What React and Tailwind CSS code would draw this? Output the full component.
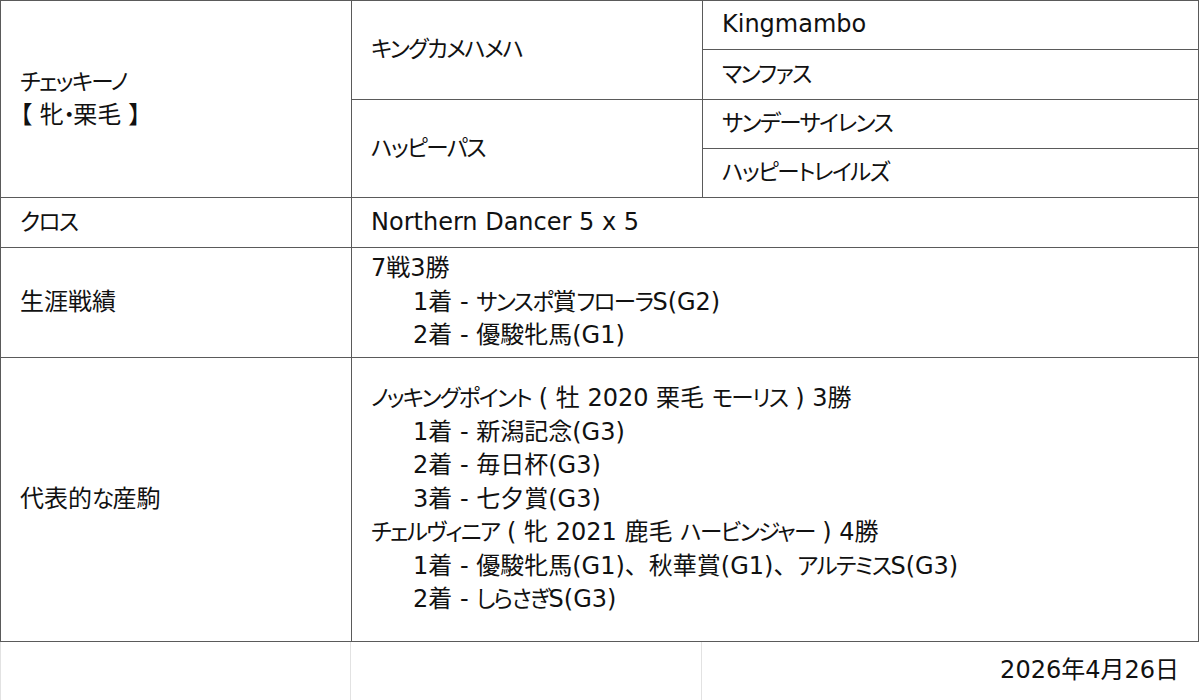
import React from "react";

const line = "border-[#5a5a5a]";

// かなは Meiryo UI のように幅を詰めて表示、漢字と英数字は 24px、読点は全角幅
const t = (str) =>
  str.split(/([\u3040-\u30ff]+|、)/).map((part, i) =>
    part === "、" ? (
      <span key={i} className="[font-feature-settings:normal]">
        {part}
      </span>
    ) : /[\u3040-\u30ff]/.test(part) ? (
      <span key={i} className="text-[22.5px] tracking-[-1.6px]">
        {part}
      </span>
    ) : (
      part
    )
  );

const Cell = ({ className = "", children }) => (
  <div className={`flex items-center pl-[19px] border-r border-b ${line} ${className}`}>
    {children}
  </div>
);

const Sub = ({ children }) => <div className="pl-[42px]">{children}</div>;

const App = () => {
  return (
    <div className="w-[1200px] h-[700px] bg-white text-[#111] text-[24px] leading-[33.5px] font-['DejaVu_Sans','Noto_Sans_CJK_JP',sans-serif] [font-feature-settings:'palt']">
      <div className={`w-[1199px] border-t border-l ${line}`}>
        {/* 血統 */}
        <div className="flex">
          <Cell className="w-[351px] h-[197px]">
            <div>
              <div>{t("チェッキーノ")}</div>
              <div>{t("【 牝・栗毛 】")}</div>
            </div>
          </Cell>
          <div className="flex flex-col w-[351px]">
            <Cell className="h-[99px]">{t("キングカメハメハ")}</Cell>
            <Cell className="h-[98px]">{t("ハッピーパス")}</Cell>
          </div>
          <div className="flex flex-col flex-1">
            <Cell className="h-[49px]">Kingmambo</Cell>
            <Cell className="h-[50px]">{t("マンファス")}</Cell>
            <Cell className="h-[49px]">{t("サンデーサイレンス")}</Cell>
            <Cell className="h-[49px]">{t("ハッピートレイルズ")}</Cell>
          </div>
        </div>

        {/* クロス */}
        <div className="flex">
          <Cell className="w-[351px] h-[50px]">{t("クロス")}</Cell>
          <Cell className="flex-1 h-[50px]">Northern Dancer 5 x 5</Cell>
        </div>

        {/* 生涯戦績 */}
        <div className="flex">
          <Cell className="w-[351px] h-[110px]">生涯戦績</Cell>
          <Cell className="flex-1 h-[110px]">
            <div>
              <div>7戦3勝</div>
              <Sub>{t("1着 - サンスポ賞フローラS(G2)")}</Sub>
              <Sub>2着 - 優駿牝馬(G1)</Sub>
            </div>
          </Cell>
        </div>

        {/* 代表的な産駒 */}
        <div className="flex">
          <Cell className="w-[351px] h-[284px]">{t("代表的な産駒")}</Cell>
          <Cell className="flex-1 h-[284px]">
            <div>
              <div>{t("ノッキングポイント ( 牡 2020 栗毛 モーリス ) 3勝")}</div>
              <Sub>1着 - 新潟記念(G3)</Sub>
              <Sub>2着 - 毎日杯(G3)</Sub>
              <Sub>3着 - 七夕賞(G3)</Sub>
              <div>{t("チェルヴィニア ( 牝 2021 鹿毛 ハービンジャー ) 4勝")}</div>
              <Sub>{t("1着 - 優駿牝馬(G1)、秋華賞(G1)、アルテミスS(G3)")}</Sub>
              <Sub>{t("2着 - しらさぎS(G3)")}</Sub>
            </div>
          </Cell>
        </div>
      </div>

      {/* 日付 */}
      <div className="flex w-[1199px] h-[59px] border-l border-b border-[#e2e2e2]">
        <div className="w-[350px] border-r border-[#e2e2e2]" />
        <div className="w-[351px] border-r border-[#e2e2e2]" />
        <div className="flex-1 flex items-center justify-end pr-5">2026年4月26日</div>
      </div>
    </div>
  );
};

export default App;
